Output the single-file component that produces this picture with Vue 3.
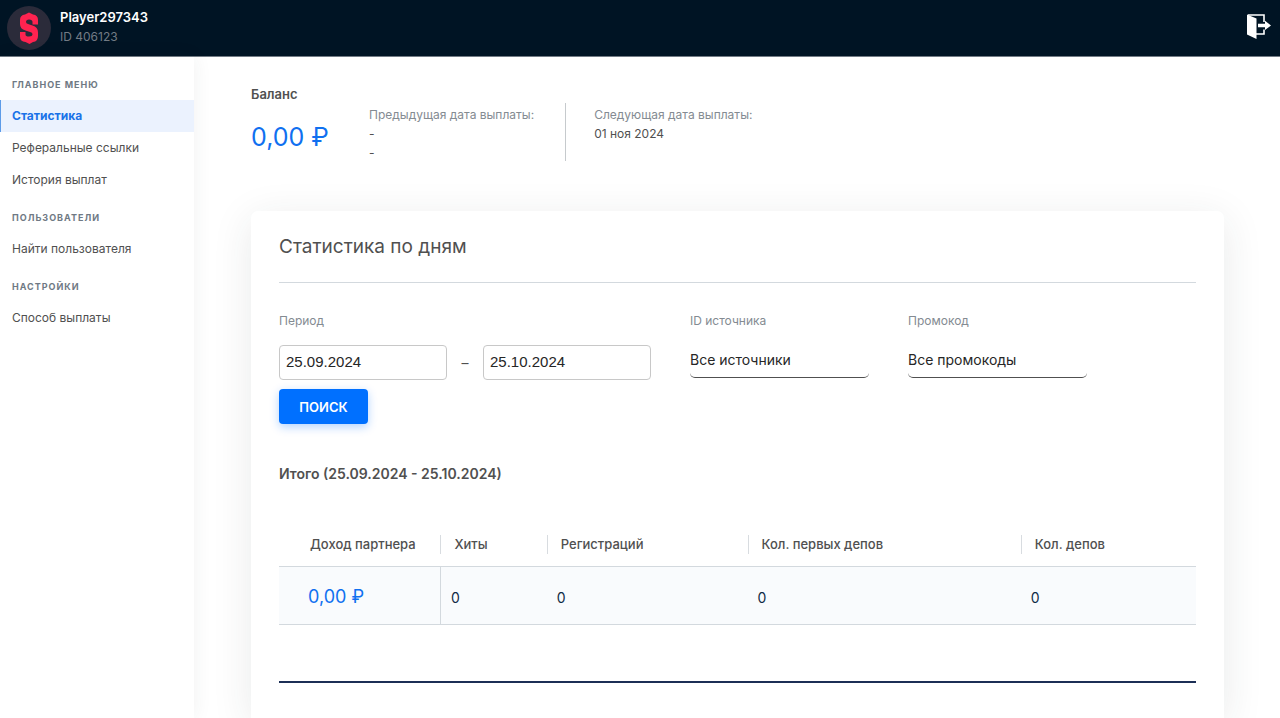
<script setup>
import { ref } from 'vue'

const menu = [
  { title: 'Главное меню', items: ['Статистика', 'Реферальные ссылки', 'История выплат'] },
  { title: 'Пользователи', items: ['Найти пользователя'] },
  { title: 'Настройки', items: ['Способ выплаты'] },
]
const active = ref('Статистика')
const dateFrom = ref('25.09.2024')
const dateTo = ref('25.10.2024')
const source = ref('Все источники')
const promo = ref('Все промокоды')
const columns = ['Доход партнера', 'Хиты', 'Регистраций', 'Кол. первых депов', 'Кол. депов']
const totals = ['0,00 ₽', '0', '0', '0', '0']
</script>

<template>
  <div class="page">
    <header class="topbar">
      <div class="avatar">
        <svg viewBox="0 0 44 44" width="44" height="44" aria-hidden="true">
          <path fill="#ff2350" d="M18 8.500 L22 6.500 L26 8.500 Q31 9 31 14 V18.500 H25.500 V16 Q25.500 13.500 22 13.500 Q19 13.500 19 16 Q19 17.500 21 18 L25.500 19.500 Q31 21 31 26.500 V30 Q31 35.500 26 36 L22.500 38 L18.500 36 Q13 35.500 13 30.500 V26 H18.500 V28.500 Q18.500 30.500 22 30.500 Q25.500 30.500 25.500 28 Q25.500 26.500 23 26 L18.500 24.500 Q13 23 13 18 V14 Q13 9 18 8.500 Z" />
        </svg>
      </div>
      <div class="user">
        <strong>Player297343</strong>
        <span>ID 406123</span>
      </div>
      <button class="logout" type="button" aria-label="Выйти">
        <svg viewBox="0 0 24 26" width="24" height="26" aria-hidden="true">
          <path fill="none" stroke="#fff" stroke-width="1.600" d="M1 1 H17 V8 M17 15.500 V20 H9" />
          <path fill="#fff" d="M0 .5 L9.500 4.500 V25 L0 20.500 Z M11 9.800 H18 V6.800 L24 11.500 L18 16 V13.200 H11 Z" />
        </svg>
      </button>
    </header>

    <div class="body">
      <nav class="sidebar">
        <section v-for="group in menu" :key="group.title">
          <h2>{{ group.title }}</h2>
          <a
            v-for="item in group.items"
            :key="item"
            href="#"
            :class="{ active: item === active }"
            @click.prevent="active = item"
          >{{ item }}</a>
        </section>
      </nav>

      <main>
        <section class="summary">
          <div class="balance">
            <h3>Баланс</h3>
            <p>0,00 ₽</p>
          </div>
          <dl class="previous">
            <dt>Предыдущая дата выплаты:</dt>
            <dd>-</dd>
            <dd>-</dd>
          </dl>
          <dl class="next">
            <dt>Следующая дата выплаты:</dt>
            <dd>01 ноя 2024</dd>
          </dl>
        </section>

        <section class="card">
          <h1>Статистика по дням</h1>
          <form @submit.prevent>
            <div class="filters">
              <div class="field">
                <label for="from">Период</label>
                <div class="range">
                  <input id="from" v-model="dateFrom" type="text" />
                  <span>–</span>
                  <input v-model="dateTo" type="text" aria-label="Конец периода" />
                </div>
              </div>
              <div class="field">
                <label for="source">ID источника</label>
                <select id="source" v-model="source"><option>Все источники</option></select>
              </div>
              <div class="field">
                <label for="promo">Промокод</label>
                <select id="promo" v-model="promo"><option>Все промокоды</option></select>
              </div>
            </div>
            <button class="search" type="submit">Поиск</button>
          </form>

          <h4>Итого ({{ dateFrom }} - {{ dateTo }})</h4>
          <table>
            <thead>
              <tr>
                <th v-for="c in columns" :key="c" scope="col"><span>{{ c }}</span></th>
              </tr>
            </thead>
            <tbody>
              <tr>
                <td v-for="(t, i) in totals" :key="i">{{ t }}</td>
              </tr>
            </tbody>
          </table>
          <hr />
        </section>
      </main>
    </div>
  </div>
</template>

<style>
body {
  margin: 0;
  background: #fff;
}
</style>

<style scoped>
* {
  box-sizing: border-box;
}

.page {
  display: flex;
  flex-direction: column;
  min-height: 100vh;
  overflow: hidden;
  font-family: Inter, "Liberation Sans", sans-serif;
  font-size: 12px;
  line-height: 19px;
  color: #505050;
}

h1,
h2,
h3,
h4,
p,
dl,
dd {
  margin: 0;
}

input,
select,
button {
  font-family: inherit;
}

.topbar {
  display: flex;
  align-items: center;
  height: 57px;
  padding: 0 9px 0 7px;
  border-bottom: 1px solid #727b85;
  background: #001424;
}

.avatar {
  width: 44px;
  height: 44px;
  border-radius: 50%;
  background: #2b2b3a;
}

.user {
  display: flex;
  flex-direction: column;
  flex: 1;
  margin-left: 9px;
  padding-bottom: 2px;
  color: #737b84;
}

.user strong {
  font-size: 13px;
  font-weight: 600;
  color: #fff;
}

.logout {
  display: flex;
  padding: 0 0 3px;
  border: 0;
  background: none;
  cursor: pointer;
}

.body {
  display: flex;
  flex: 1;
}

.sidebar {
  flex: none;
  width: 194px;
  padding-top: 6px;
  box-shadow: 0 0 18px rgba(40, 60, 60, 0.07);
}

.sidebar h2 {
  padding: 15px 12px 8px;
  font-size: 9px;
  line-height: 14px;
  font-weight: 700;
  letter-spacing: 1px;
  text-transform: uppercase;
  color: #6f7984;
}

.sidebar a {
  display: block;
  padding: 0 12px;
  line-height: 32px;
  color: #505050;
  text-decoration: none;
}

.sidebar a.active {
  background: #ebf2fe;
  box-shadow: inset 1px 0 #5c9be8;
  font-weight: 700;
  color: #1a73e8;
}

main {
  display: flex;
  flex-direction: column;
  flex: 1;
  min-width: 0;
  padding: 28px 56px 0 57px;
}

.summary {
  display: flex;
  height: 126px;
}

.balance {
  width: 118px;
}

.balance h3 {
  font-size: 13px;
  font-weight: 600;
}

.balance p {
  margin-top: 16px;
  font-size: 25px;
  line-height: 34px;
  color: #1070f0;
  white-space: nowrap;
}

.summary dl {
  height: 58px;
  margin-top: 18px;
  padding-top: 2px;
}

.previous {
  padding-right: 31px;
  border-right: 1px solid #c6cacd;
}

.next {
  padding-left: 28px;
}

dt {
  color: #848b92;
}

.card {
  flex: 1;
  padding: 22px 28px 34px;
  border-radius: 7px 7px 0 0;
  background: #fff;
  box-shadow: 0 8px 40px rgba(40, 50, 50, 0.1);
}

h1 {
  padding-bottom: 21px;
  border-bottom: 1px solid #d3d9de;
  font-size: 19px;
  line-height: 28px;
  font-weight: 400;
}

form {
  padding-top: 28px;
}

.filters {
  display: flex;
  gap: 39px;
}

.field label {
  display: block;
  color: #848b92;
}

.range {
  display: flex;
  align-items: center;
  margin-top: 15px;
}

.range span {
  width: 36px;
  font-size: 14px;
  text-align: center;
}

.range input {
  width: 168px;
  height: 35px;
  padding: 0 6px 2px;
  border: 1px solid #c8c8c8;
  border-radius: 4px;
  background: #fff;
  font-family: "Liberation Sans", sans-serif;
  font-size: 15px;
  color: #262626;
}

select {
  display: block;
  width: 179px;
  height: 34px;
  margin-top: 14px;
  padding: 0 0 2px;
  border: 1px solid transparent;
  border-width: 0 0 1px;
  border-bottom-color: #505050;
  border-radius: 5px;
  background: #fff;
  appearance: none;
  font-size: 14px;
  color: #262626;
}

.search {
  display: block;
  width: 89px;
  height: 35px;
  margin-top: 9px;
  padding: 0;
  border: 0;
  border-radius: 4px;
  background: #0070ff;
  box-shadow: 0 3px 10px rgba(0, 112, 255, 0.3);
  font-size: 13px;
  font-weight: 600;
  text-transform: uppercase;
  color: #fff;
  cursor: pointer;
}

h4 {
  margin-top: 40px;
  font-size: 14px;
  line-height: 20px;
  font-weight: 600;
}

table {
  width: 100%;
  margin-top: 40px;
  border-collapse: collapse;
  table-layout: fixed;
}

th {
  height: 42px;
  padding: 0;
  text-align: left;
  font-size: 13px;
  font-weight: 500;
}

th span {
  display: block;
  padding-left: 13px;
  border-left: 1px solid #d8dce0;
}

th:nth-child(1) {
  width: 17.6%;
}

th:nth-child(2) {
  width: 11.6%;
}

th:nth-child(3) {
  width: 21.9%;
}

th:nth-child(4) {
  width: 29.8%;
}

th:first-child span {
  padding-left: 31px;
  border-left: 0;
}

tbody tr {
  border-top: 1px solid #d3d9de;
  border-bottom: 1px solid #d3d9de;
  background: #f9fbfd;
}

td {
  height: 58px;
  padding: 4px 10px 0;
  font-size: 14px;
  color: #102b46;
}

td:first-child {
  padding: 2px 29px 0;
  border-right: 1px solid #d3d9de;
  font-size: 18px;
  color: #1070f0;
}

hr {
  height: 2px;
  margin: 56px 0 0;
  border: 0;
  background: #1c2f56;
}
</style>
